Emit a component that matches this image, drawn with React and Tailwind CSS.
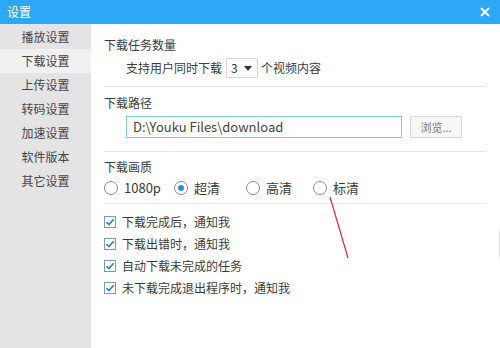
import React from "react";

const font = { fontFamily: '"Noto Sans CJK SC", "Noto Sans", sans-serif' };

function Radio({ checked, label, className = "" }) {
  return (
    <div className={"flex items-center gap-[6px] " + className}>
      <span className="w-[14px] h-[14px] rounded-full border border-[#8a8a8a] bg-white flex items-center justify-center">
        {checked && <span className="w-[6px] h-[6px] rounded-full bg-[#2b8fe0]" />}
      </span>
      <span>{label}</span>
    </div>
  );
}

function Check({ label }) {
  return (
    <div className="flex items-center gap-[6px] h-[22px]">
      <span className="w-[12px] h-[12px] border border-[#7a9ab8] bg-white flex items-center justify-center">
        <svg width="10" height="10" viewBox="0 0 10 10">
          <path d="M1.5 5.2 L4 7.6 L8.6 2.2" fill="none" stroke="#2a7fd0" strokeWidth="1.6" />
        </svg>
      </span>
      <span>{label}</span>
    </div>
  );
}

export default function App() {
  const side = ["播放设置", "下载设置", "上传设置", "转码设置", "加速设置", "软件版本", "其它设置"];
  return (
    <div className="relative w-[500px] h-[348px] overflow-hidden bg-white text-[12px] text-[#3a3a3a]" style={font}>
      <div className="h-[24px] bg-[#2ca8f6] flex items-center justify-between pl-[7px] pr-[10px] text-white">
        <span className="text-[12px]">设置</span>
        <svg width="10" height="10" viewBox="0 0 10 10">
          <path d="M1 1 L9 9 M9 1 L1 9" stroke="white" strokeWidth="2" />
        </svg>
      </div>
      <div className="flex h-[324px]">
        <div className="w-[91px] bg-[#e4e4e4] pt-[1px] flex flex-col text-[#444]">
          {side.map((s, i) => (
            <div
              key={s}
              className={"h-[24px] flex items-center justify-center " + (i === 1 ? "bg-[#f1f1f1]" : "")}
            >
              {s}
            </div>
          ))}
        </div>
        <div className="flex-1 pl-[13px] pr-[14px] pt-[12px] flex flex-col">
          <div className="leading-[18px]">下载任务数量</div>
          <div className="flex items-center pl-[22px] mt-[3px] h-[22px]">
            <span>支持用户同时下载</span>
            <span className="ml-[4px] w-[32px] h-[20px] border border-[#d8d8d8] flex items-center pl-[4px] gap-[6px]">
              <span>3</span>
              <svg width="8" height="5" viewBox="0 0 8 5"><path d="M0 0 L8 0 L4 5 Z" fill="#333" /></svg>
            </span>
            <span className="ml-[3px]">个视频内容</span>
          </div>
          <div className="h-px bg-[#e6e6e6] mt-[7px]" />
          <div className="leading-[18px] mt-[7px]">下载路径</div>
          <div className="flex items-center pl-[22px] mt-[4px]">
            <div className="w-[276px] h-[22px] border border-[#84cbd9] flex items-center pl-[6px] text-[13px] text-[#444]">
              D:\Youku Files\download
            </div>
            <div className="ml-[8px] w-[52px] h-[22px] border border-[#d8d8d8] bg-[#f7f7f7] flex items-center justify-center text-[11px] text-[#777]">
              浏览...
            </div>
          </div>
          <div className="h-px bg-[#e6e6e6] mt-[13px]" />
          <div className="leading-[18px] mt-[6px]">下载画质</div>
          <div className="flex items-center h-[22px] mt-[1px] text-[13px]">
            <Radio label="1080p" className="w-[70px]" />
            <Radio checked label="超清" className="w-[72px]" />
            <Radio label="高清" className="w-[67px]" />
            <Radio label="标清" />
          </div>
          <div className="h-px bg-[#e6e6e6] mt-[4px]" />
          <div className="flex flex-col mt-[7px]">
            <Check label="下载完成后，通知我" />
            <Check label="下载出错时，通知我" />
            <Check label="自动下载未完成的任务" />
            <Check label="未下载完成退出程序时，通知我" />
          </div>
        </div>
      </div>
      <div className="absolute right-0 top-[230px] w-px h-[28px] bg-[#dcdcdc]" />
      <svg className="absolute left-0 top-0" width="500" height="348">
        <path d="M330 197 L348 258" stroke="#e0283a" strokeWidth="1.2" />
      </svg>
    </div>
  );
}
